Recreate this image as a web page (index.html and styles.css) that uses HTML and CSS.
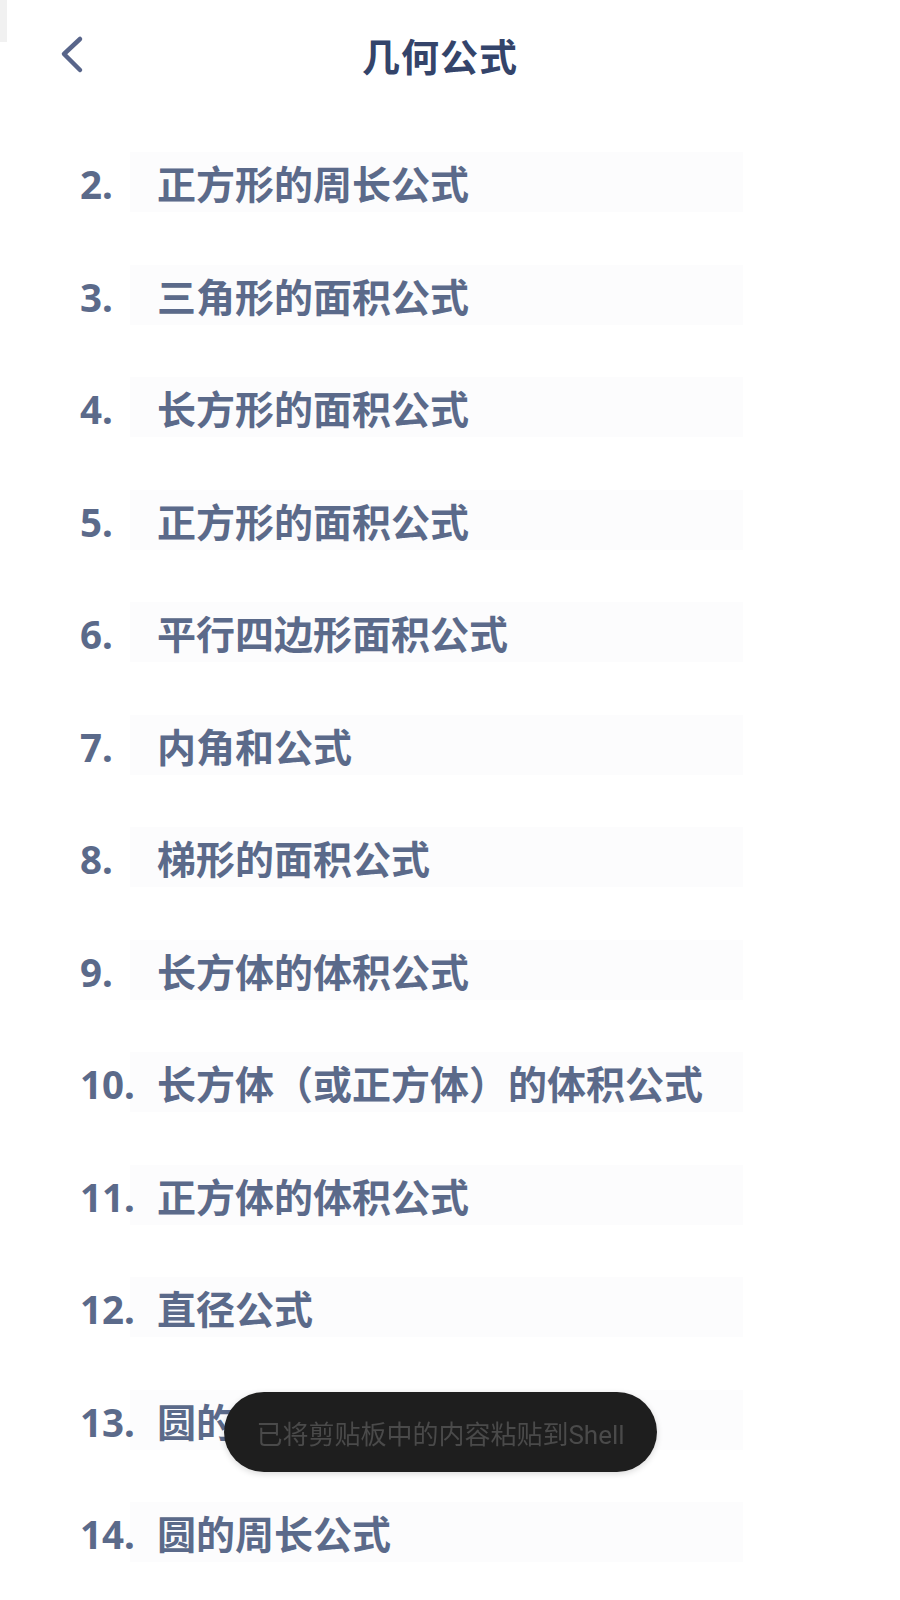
FILE: index.html
```html
<!DOCTYPE html>
<html lang="zh-CN">
<head>
<meta charset="utf-8">
<title>几何公式</title>
<link rel="stylesheet" href="styles.css">
</head>
<body>
<div class="corner"></div>
<header class="topbar">
  <button class="back" aria-label="返回">
    <svg width="30" height="40" viewBox="0 0 30 40"><path d="M22 4 L6 19 L22 35" fill="none" stroke="#58658a" stroke-width="4.5" stroke-linecap="round" stroke-linejoin="round"/></svg>
  </button>
  <h1 class="title">几何公式</h1>
  <span></span>
</header>
<ol class="list">
  <li class="row"><span class="num">2.</span><span class="label">正方形的周长公式</span></li>
  <li class="row"><span class="num">3.</span><span class="label">三角形的面积公式</span></li>
  <li class="row"><span class="num">4.</span><span class="label">长方形的面积公式</span></li>
  <li class="row"><span class="num">5.</span><span class="label">正方形的面积公式</span></li>
  <li class="row"><span class="num">6.</span><span class="label">平行四边形面积公式</span></li>
  <li class="row"><span class="num">7.</span><span class="label">内角和公式</span></li>
  <li class="row"><span class="num">8.</span><span class="label">梯形的面积公式</span></li>
  <li class="row"><span class="num">9.</span><span class="label">长方体的体积公式</span></li>
  <li class="row"><span class="num">10.</span><span class="label">长方体（或正方体）的体积公式</span></li>
  <li class="row"><span class="num">11.</span><span class="label">正方体的体积公式</span></li>
  <li class="row"><span class="num">12.</span><span class="label">直径公式</span></li>
  <li class="row"><span class="num">13.</span><span class="label">圆的面积公式</span></li>
  <li class="row"><span class="num">14.</span><span class="label">圆的周长公式</span></li>
</ol>
<div class="toast">已将剪贴板中的内容粘贴到Shell</div>
</body>
</html>
```
FILE: styles.css
```css
html, body {
  margin: 0;
  padding: 0;
  background: #ffffff;
  font-family: "Noto Sans CJK SC", "Noto Sans", sans-serif;
}
.corner {
  position: absolute;
  left: 0;
  top: 0;
  width: 7px;
  height: 42px;
  background: #f1f1f1;
}
.topbar {
  height: 110px;
  display: grid;
  grid-template-columns: 1fr auto 1fr;
  align-items: center;
}
.back {
  justify-self: start;
  margin-left: 58px;
  padding: 0;
  border: 0;
  background: transparent;
  width: 30px;
  height: 40px;
  display: flex;
}
.title {
  margin: 0;
  font-size: 38px;
  font-weight: 700;
  color: #34446a;
  letter-spacing: 1px;
  line-height: 1;
  transform: translateX(-10px);
}
.list {
  list-style: none;
  margin: 0;
  padding: 16px 0 0 80px;
}
.row {
  height: 112.5px;
  display: flex;
  align-items: center;
  color: #5b6a8a;
  font-weight: 700;
}
.num {
  position: relative;
  z-index: 1;
  width: 77px;
  flex: none;
  padding-top: 4px;
  font-family: "Noto Sans", "Open Sans", sans-serif;
  font-size: 38.5px;
  line-height: 1;
}
.label {
  display: flex;
  align-items: center;
  height: 60px;
  width: 586px;
  margin-left: -27px;
  padding-left: 27px;
  background: #fcfcfd;
  font-size: 39px;
  white-space: nowrap;
}
.toast {
  position: fixed;
  left: 224px;
  top: 1392px;
  width: 433px;
  height: 80px;
  border-radius: 40px;
  background: #1e1e1e;
  color: #4a4a4a;
  font-size: 26px;
  display: flex;
  align-items: center;
  justify-content: center;
  box-shadow: 0 2px 6px rgba(0,0,0,0.15);
  font-family: Roboto, "Noto Sans CJK SC", sans-serif;
}
```
